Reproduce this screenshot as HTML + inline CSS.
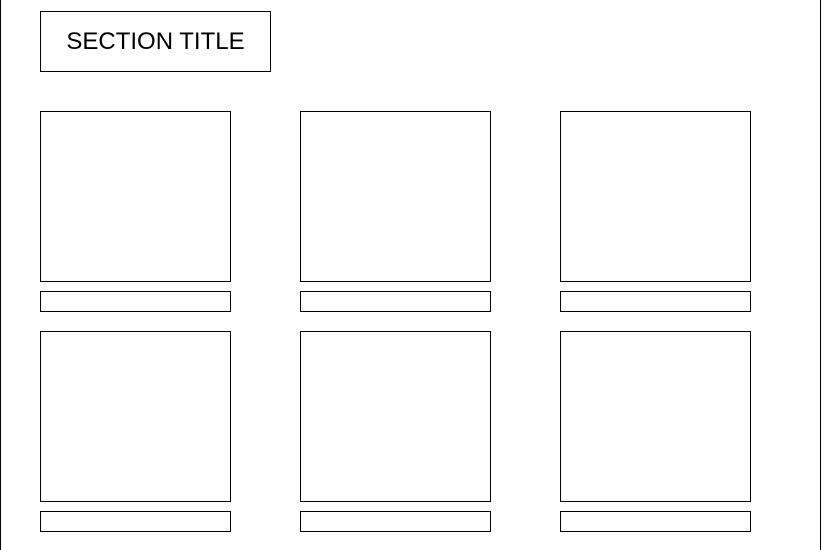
<!DOCTYPE html>
<html><head><style>
body{margin:0;width:822px;height:550px;position:relative;background:#fff;overflow:hidden;font-family:"Liberation Sans",Arial,sans-serif}
.b{position:absolute;border:1px solid #000;box-sizing:border-box}
.t{left:40px;top:11px;width:231px;height:61px;display:flex;align-items:center;justify-content:center;font-size:24px;color:#000}
</style></head><body>
<div style="position:absolute;left:0;top:0;width:1px;height:550px;background:#000"></div>
<div style="position:absolute;left:820px;top:0;width:1px;height:550px;background:#000"></div>
<div class="b t">SECTION TITLE</div>
<div class="b" style="left:40px;top:111px;width:191px;height:171px"></div>
<div class="b" style="left:300px;top:111px;width:191px;height:171px"></div>
<div class="b" style="left:560px;top:111px;width:191px;height:171px"></div>
<div class="b" style="left:40px;top:291px;width:191px;height:21px"></div>
<div class="b" style="left:300px;top:291px;width:191px;height:21px"></div>
<div class="b" style="left:560px;top:291px;width:191px;height:21px"></div>
<div class="b" style="left:40px;top:331px;width:191px;height:171px"></div>
<div class="b" style="left:300px;top:331px;width:191px;height:171px"></div>
<div class="b" style="left:560px;top:331px;width:191px;height:171px"></div>
<div class="b" style="left:40px;top:511px;width:191px;height:21px"></div>
<div class="b" style="left:300px;top:511px;width:191px;height:21px"></div>
<div class="b" style="left:560px;top:511px;width:191px;height:21px"></div>
</body></html>
